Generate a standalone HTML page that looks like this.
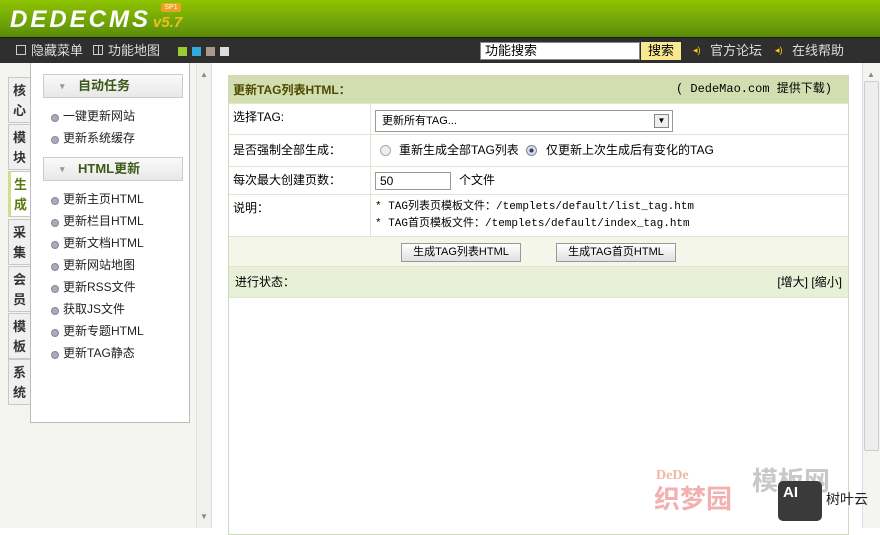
<!DOCTYPE html>
<html><head><meta charset="utf-8"><style>
*{margin:0;padding:0;box-sizing:border-box}
body{width:880px;height:528px;overflow:hidden;background:#fff;font-family:"Liberation Sans","Noto Sans CJK SC",sans-serif;font-size:12px;line-height:15px;color:#000;position:relative}
.abs{position:absolute}
#hd{left:0;top:0;width:880px;height:37px;background:linear-gradient(#8fc400,#6a9e0a 70%,#5a8a05)}
#tb{left:0;top:37px;width:880px;height:26px;background:#2f2f2f;border-top:1px solid #1a1a1a;color:#ddd;font-size:13px}
#left{left:0;top:63px;width:196px;height:465px;background:#f4f5f0}
.tab{position:absolute;left:8px;width:22px;height:46px;background:#f0f0f0;border:1px solid #c8c8c8;border-right:none;font-weight:bold;font-size:13px;color:#333;text-align:center;line-height:20px;padding-top:3px}
#menu{left:30px;top:63px;width:160px;height:360px;background:#fff;border:1px solid #bbb;border-top:none}
.mh{position:absolute;left:12px;width:140px;height:24px;border:1px solid #ccc;background:linear-gradient(#fafafa,#e8e8e8);font-weight:bold;color:#3a5a1a;font-size:13px;line-height:22px;padding-left:34px}
.mh:before{content:"▾";position:absolute;left:16px;color:#999;font-size:9px}
.mi{position:absolute;left:32px;font-size:12px;color:#222}
.mi:before{content:"";position:absolute;left:-12px;top:5px;width:6px;height:6px;border-radius:50%;background:#aab;border:1px solid #889}
#sb1{left:196px;top:63px;width:16px;height:465px;background:#f0f0ec;border-left:1px solid #e0e0e0;border-right:1px solid #ddd}
#sb2{left:862px;top:63px;width:18px;height:465px;background:#f4f4f2;border-left:1px solid #ddd}
#tbl{left:228px;top:75px;width:621px;height:460px;border:1px solid #d0d8c0;background:#fff}
.row{position:absolute;left:0;width:619px;border-bottom:1px solid #dfe5cf}
.lab{position:absolute;left:4px;top:6px}
.vc{position:absolute;left:141px;top:0;bottom:0;border-left:1px solid #dfe5cf}
.btn{position:absolute;top:6px;height:19px;border:1px solid #999;background:linear-gradient(#fff,#e0e0e0);font-size:11px;line-height:17px;text-align:center}
</style></head><body>
<div id="hd" class="abs">
 <div class="abs" style="left:10px;top:6px;font:italic bold 24px/28px 'Liberation Sans',sans-serif;color:#fff;letter-spacing:3px">DEDECMS</div>
 <div class="abs" style="left:153px;top:14px;font:italic bold 15px/18px 'Liberation Sans',sans-serif;color:#e8c020">v5.7</div>
 <div class="abs" style="left:161px;top:3px;width:20px;height:9px;background:#f0a020;border-radius:2px;font-size:7px;color:#fff;line-height:9px;text-align:center">SP1</div>
</div>
<div id="tb" class="abs">
 <div class="abs" style="left:16px;top:7px;width:10px;height:10px;border:1px solid #ccc"></div>
 <div class="abs" style="left:31px;top:5px">隐藏菜单</div>
 <div class="abs" style="left:93px;top:7px;width:10px;height:10px;border:1px solid #ccc;background:linear-gradient(90deg,transparent 4px,#ccc 4px,#ccc 5px,transparent 5px)"></div>
 <div class="abs" style="left:108px;top:5px">功能地图</div>
 <div class="abs" style="left:178px;top:9px;width:9px;height:9px;background:#9c3"></div>
 <div class="abs" style="left:192px;top:9px;width:9px;height:9px;background:#3ad"></div>
 <div class="abs" style="left:206px;top:9px;width:9px;height:9px;background:#a98"></div>
 <div class="abs" style="left:220px;top:9px;width:9px;height:9px;background:#ddd"></div>
 <div class="abs" style="left:480px;top:4px;width:160px;height:18px;background:#fff;border:1px solid #888;color:#000;padding-left:4px;line-height:16px">功能搜索</div>
 <div class="abs" style="left:641px;top:4px;width:40px;height:18px;background:#f8e890;color:#000;text-align:center;line-height:18px">搜索</div>
 <div class="abs" style="left:693px;top:5px;color:#fc0;font-size:9px">◂)</div>
 <div class="abs" style="left:710px;top:5px">官方论坛</div>
 <div class="abs" style="left:775px;top:5px;color:#fc0;font-size:9px">◂)</div>
 <div class="abs" style="left:792px;top:5px">在线帮助</div>
</div>
<div id="left" class="abs">
 <div class="tab" style="top:14px">核<br>心</div>
 <div class="tab" style="top:61px">模<br>块</div>
 <div class="tab" style="top:108px;background:#fff;color:#5a7a10;border-left:3px solid #cde08a">生<br>成</div>
 <div class="tab" style="top:156px">采<br>集</div>
 <div class="tab" style="top:203px">会<br>员</div>
 <div class="tab" style="top:250px">模<br>板</div>
 <div class="tab" style="top:296px">系<br>统</div>
</div>
<div id="menu" class="abs">
 <div class="mh" style="top:11px">自动任务</div>
 <div class="mi" style="top:46px">一键更新网站</div>
 <div class="mi" style="top:68px">更新系统缓存</div>
 <div class="mh" style="top:94px">HTML更新</div>
 <div class="mi" style="top:129px">更新主页HTML</div>
 <div class="mi" style="top:151px">更新栏目HTML</div>
 <div class="mi" style="top:173px">更新文档HTML</div>
 <div class="mi" style="top:195px">更新网站地图</div>
 <div class="mi" style="top:217px">更新RSS文件</div>
 <div class="mi" style="top:239px">获取JS文件</div>
 <div class="mi" style="top:261px">更新专题HTML</div>
 <div class="mi" style="top:283px">更新TAG静态</div>
</div>
<div id="sb1" class="abs"><div class="abs" style="left:3px;top:4px;font-size:8px;color:#888">▲</div><div class="abs" style="left:3px;bottom:4px;font-size:8px;color:#888">▼</div></div>
<div id="sb2" class="abs"><div class="abs" style="left:4px;top:4px;font-size:8px;color:#888">▲</div><div class="abs" style="left:1px;top:18px;width:15px;height:370px;background:#eee;border:1px solid #ccc;border-radius:2px"></div></div>
<div id="tbl" class="abs">
 <div class="row" style="top:0;height:28px;background:#d3deb0">
  <div class="abs" style="left:4px;top:7px;font-weight:bold;color:#4a4a00">更新TAG列表HTML：</div>
  <div class="abs" style="right:16px;top:6px;font-family:'Liberation Mono','Noto Sans CJK SC',monospace">( DedeMao.com 提供下载)</div>
 </div>
 <div class="row" style="top:28px;height:31px"><div class="lab">选择TAG:</div><div class="vc"></div>
  <div class="abs" style="left:146px;top:6px;width:298px;height:22px;border:1px solid #999;padding-left:6px;line-height:20px;font-size:11px">更新所有TAG...<div class="abs" style="right:3px;top:3px;width:15px;height:14px;border:1px solid #888;background:#eee;font-size:8px;line-height:12px;text-align:center">▼</div></div>
 </div>
 <div class="row" style="top:59px;height:32px"><div class="lab" style="top:8px">是否强制全部生成：</div><div class="vc"></div>
  <div class="abs" style="left:151px;top:10px;width:11px;height:11px;border:1px solid #aaa;border-radius:50%;background:#eee"></div>
  <div class="abs" style="left:170px;top:8px">重新生成全部TAG列表</div>
  <div class="abs" style="left:297px;top:10px;width:11px;height:11px;border:1px solid #789;border-radius:50%;background:radial-gradient(#345 30%,#dde 35%)"></div>
  <div class="abs" style="left:317px;top:8px">仅更新上次生成后有变化的TAG</div>
 </div>
 <div class="row" style="top:91px;height:28px"><div class="lab" style="top:6px">每次最大创建页数：</div><div class="vc"></div>
  <div class="abs" style="left:146px;top:5px;width:76px;height:18px;border:1px solid #999;padding-left:4px;line-height:16px">50</div>
  <div class="abs" style="left:230px;top:6px">个文件</div>
 </div>
 <div class="row" style="top:119px;height:42px"><div class="lab">说明：</div><div class="vc"></div>
  <div class="abs" style="left:146px;top:5px;font-size:11px;font-family:'Liberation Mono','Noto Sans CJK SC',monospace">* TAG列表页模板文件：/templets/default/list_tag.htm</div>
  <div class="abs" style="left:146px;top:22px;font-size:11px;font-family:'Liberation Mono','Noto Sans CJK SC',monospace">* TAG首页模板文件：/templets/default/index_tag.htm</div>
 </div>
 <div class="row" style="top:161px;height:30px;background:#f4f6ea">
  <div class="btn" style="left:172px;width:120px">生成TAG列表HTML</div>
  <div class="btn" style="left:327px;width:120px">生成TAG首页HTML</div>
 </div>
 <div class="row" style="top:191px;height:31px;background:#e9f0d8">
  <div class="abs" style="left:6px;top:8px">进行状态：</div>
  <div class="abs" style="right:6px;top:8px">[增大] [缩小]</div>
 </div>
</div>
<div class="abs" style="left:656px;top:468px;font:bold 14px 'Liberation Serif',serif;color:#f0b8a0">DeDe</div>
<div class="abs" style="left:654px;top:484px;font-size:26px;line-height:30px;font-weight:bold;color:#f2b0b0">织梦园</div>
<div class="abs" style="left:752px;top:466px;font-size:26px;line-height:30px;font-weight:bold;color:#c8c8c8">模板网</div>
<div class="abs" style="left:778px;top:481px;width:44px;height:40px;background:#3a3a3a;border-radius:5px;color:#fff;font-weight:bold;font-size:15px;padding:4px 0 0 5px">AI</div>
<div class="abs" style="left:826px;top:492px;font-size:14px;color:#222">树叶云</div>
</body></html>
